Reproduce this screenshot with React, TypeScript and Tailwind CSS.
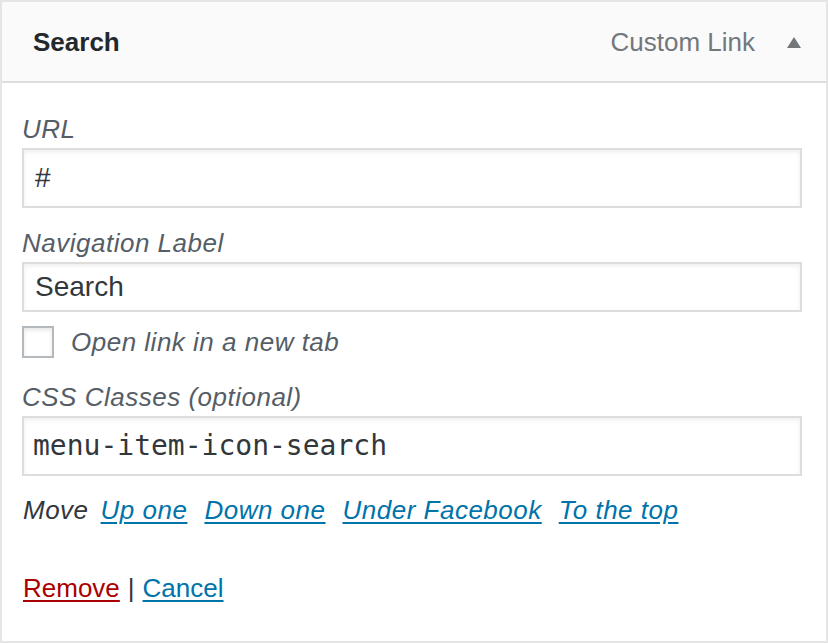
import React from "react";

const font = { fontFamily: '"Liberation Sans", Arial, sans-serif' };

function Field({ label, value, mono, h }: { label: string; value: string; mono?: boolean; h: string }) {
  return (
    <div className="flex flex-col">
      <div className="h-[36px] leading-[36px] text-[26px] italic tracking-[0.5px] text-[#555d66]">{label}</div>
      <div
        className={`mt-[1px] ${h} w-[780px] border-2 border-[#dddddd] bg-white shadow-[inset_0_2px_4px_rgba(0,0,0,0.07)] flex items-center text-[#32373c] text-[28px] ${
          mono ? "pl-[9px]" : "pl-[11px]"
        }`}
        style={mono ? { fontFamily: '"DejaVu Sans Mono", Menlo, monospace' } : undefined}
      >
        {value}
      </div>
    </div>
  );
}

export default function App() {
  return (
    <div className="w-[828px] h-[643px] bg-white border-2 border-[#e5e5e5] flex flex-col" style={font}>
      <div className="h-[79px] shrink-0 bg-[#fafafa] border-b-2 border-[#dddddd] flex items-center justify-between pl-[31px] pr-[25px] box-content">
        <span className="text-[26px] font-bold text-[#23282d] mt-[2px]">Search</span>
        <div className="flex items-center gap-[32px] mt-[2px]">
          <span className="text-[26px] text-[#72777c]">Custom Link</span>
          <svg width="14" height="11" viewBox="0 0 14 11">
            <polygon points="7,0 14,11 0,11" fill="#72777c" />
          </svg>
        </div>
      </div>
      <div className="flex flex-col pl-[20px] pr-[24px] pt-[28px]">
        <Field label="URL" value="#" h="h-[60px]" />
        <div className="mt-[17px]">
          <Field label="Navigation Label" value="Search" h="h-[50px]" />
        </div>
        <div className="mt-[12px] flex items-center h-[36px]">
          <div className="w-[32px] h-[32px] border-2 border-[#b4b9be] bg-white shadow-[inset_0_2px_4px_rgba(0,0,0,0.1)]" />
          <span className="ml-[17px] text-[26px] italic tracking-[0.5px] text-[#555d66] leading-[36px]">Open link in a new tab</span>
        </div>
        <div className="mt-[19px]">
          <Field label="CSS Classes (optional)" value="menu-item-icon-search" mono h="h-[60px]" />
        </div>
        <div className="mt-[16px] h-[36px] leading-[36px] text-[26px] italic tracking-[0.5px] flex items-center whitespace-nowrap">
          <span className="text-[#32373c] mr-[12px] ml-[1px]">Move</span>
          <a className="text-[#0073aa] underline underline-offset-[3px] mr-[17px]">Up one</a>
          <a className="text-[#0073aa] underline underline-offset-[3px] mr-[17px]">Down one</a>
          <a className="text-[#0073aa] underline underline-offset-[3px] mr-[17px]">Under Facebook</a>
          <a className="text-[#0073aa] underline underline-offset-[3px]">To the top</a>
        </div>
        <div className="mt-[42px] h-[36px] leading-[36px] text-[26px] flex items-center whitespace-nowrap ml-[1px]">
          <a className="text-[#a00] underline underline-offset-[3px]">Remove</a>
          <span className="text-[#32373c] mx-[8px]">|</span>
          <a className="text-[#0073aa] underline underline-offset-[3px]">Cancel</a>
        </div>
      </div>
    </div>
  );
}
